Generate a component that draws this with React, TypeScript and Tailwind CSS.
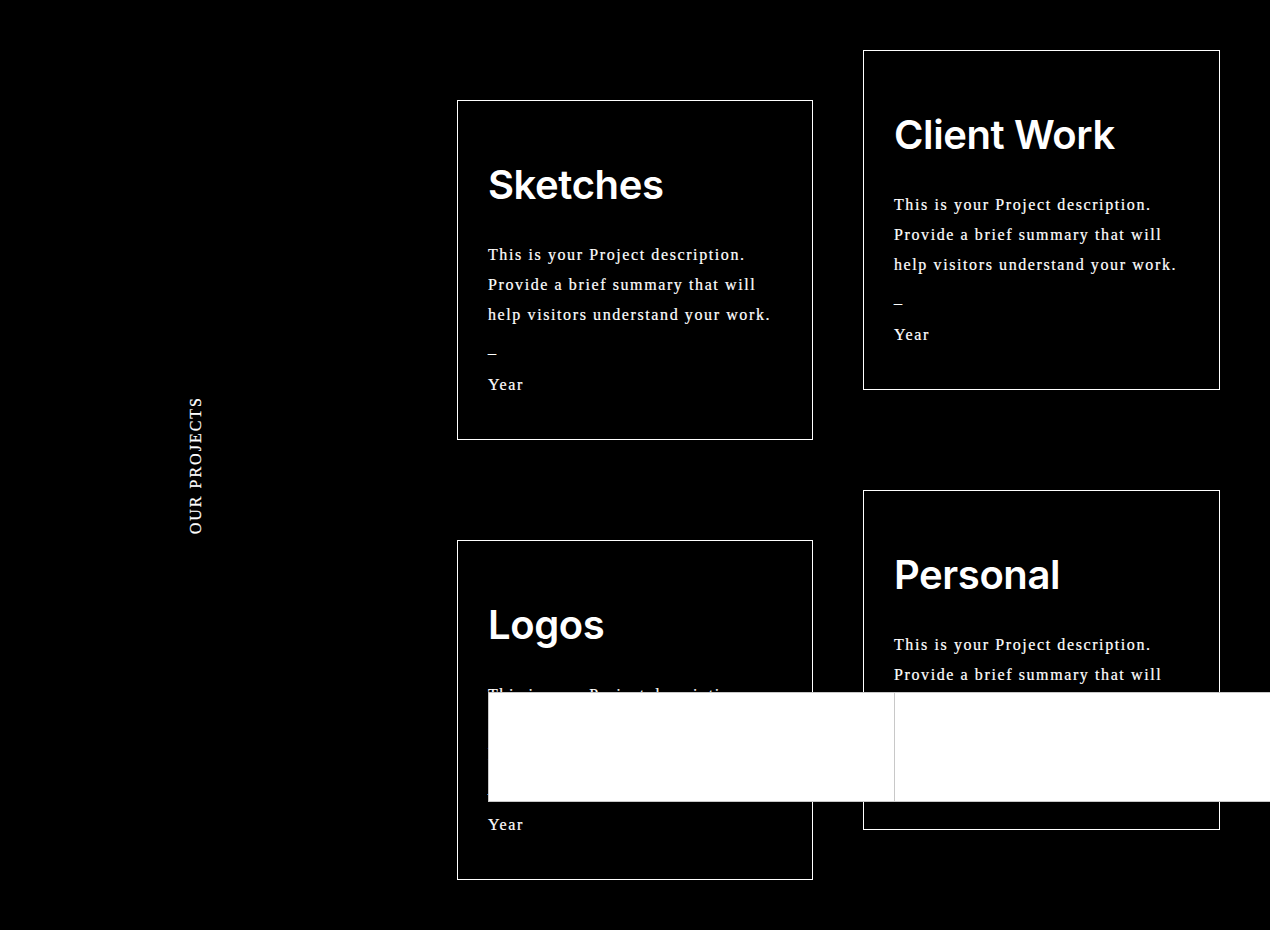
const projects = [
  { title: 'Sketches' },
  { title: 'Client Work' },
  { title: 'Logos' },
  { title: 'Personal' },
];

function ProjectCard({ title, wide }: { title: string; wide?: boolean }) {
  return (
    <div
      className={`h-[340px] border border-white px-[30px] pt-[60px] text-white ${
        wide ? 'w-[357px]' : 'w-[356px]'
      }`}
    >
      <h2 className="font-['Inter',sans-serif] text-[40px] font-semibold leading-[48px] tracking-[-0.4px]">
        {title}
      </h2>
      <div className="mt-[31px] font-['Liberation_Serif',serif] text-[16px] leading-[30px] tracking-[0.1em] [-webkit-text-stroke:0.2px_white]">
        <p>
          This is your Project description.
          <br />
          Provide a brief summary that will
          <br />
          help visitors understand your work.
        </p>
        <p className="mt-2">–</p>
        <p className="mt-[2px]">Year</p>
      </div>
    </div>
  );
}

export default function App() {
  return (
    <div className="relative min-h-[930px] w-full overflow-hidden bg-black">
      <div className="flex">
        {/* side label */}
        <div className="flex w-[457px] shrink-0 items-center pl-[186px]">
          <span className="rotate-180 font-['Liberation_Serif',serif] text-[16px] leading-[20px] tracking-[2px] text-white [-webkit-text-stroke:0.2px_white] [writing-mode:vertical-rl]">
            OUR PROJECTS
          </span>
        </div>

        {/* project grid */}
        <div className="flex gap-[50px]">
          <div className="flex flex-col gap-[100px] pt-[100px] pb-[50px]">
            <ProjectCard title={projects[0].title} />
            <ProjectCard title={projects[2].title} />
          </div>
          <div className="flex flex-col gap-[100px] pt-[50px]">
            <ProjectCard title={projects[1].title} wide />
            <ProjectCard title={projects[3].title} wide />
          </div>
        </div>
      </div>

      {/* embedded white panel lying over the cards */}
      <div className="absolute top-[692px] left-[488px] flex h-[110px] w-[812px] border border-[#c8c8c8] bg-white">
        <div className="w-[406px] border-r border-[#c8c8c8]" />
        <div className="flex-1" />
      </div>
    </div>
  );
}
